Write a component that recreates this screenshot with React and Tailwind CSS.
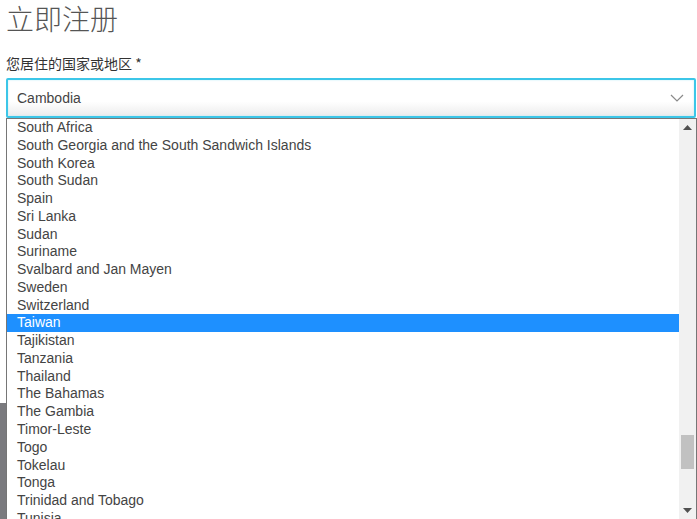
const countries = [
  "South Africa",
  "South Georgia and the South Sandwich Islands",
  "South Korea",
  "South Sudan",
  "Spain",
  "Sri Lanka",
  "Sudan",
  "Suriname",
  "Svalbard and Jan Mayen",
  "Sweden",
  "Switzerland",
  "Taiwan",
  "Tajikistan",
  "Tanzania",
  "Thailand",
  "The Bahamas",
  "The Gambia",
  "Timor-Leste",
  "Togo",
  "Tokelau",
  "Tonga",
  "Trinidad and Tobago",
  "Tunisia",
];

function Scrollbar() {
  return (
    <div className="w-[17px] shrink-0 bg-[#f1f1f1] flex flex-col items-center">
      <div className="h-[17px] w-full flex items-center justify-center">
        <svg width="9" height="5" viewBox="0 0 9 5">
          <path d="M4.5 0L9 5H0z" fill="#505050" />
        </svg>
      </div>
      <div className="flex-1 w-full px-[2px] flex flex-col">
        <div className="h-[299px]" />
        <div className="h-[34px] bg-[#c1c1c1]" />
      </div>
      <div className="h-[17px] w-full flex items-center justify-center">
        <svg width="9" height="5" viewBox="0 0 9 5">
          <path d="M0 0H9L4.5 5z" fill="#505050" />
        </svg>
      </div>
    </div>
  );
}

export default function App() {
  return (
    <div
      className="h-[519px] w-[697px] overflow-hidden bg-white flex flex-col"
      style={{ fontFamily: '"Liberation Sans", Arial, "Noto Sans CJK SC", sans-serif' }}
    >
      <h1
        className="pl-[6px] h-[52px] text-[28px] leading-[36px] font-light text-[#555]"
        style={{ fontFamily: '"Noto Sans CJK SC", sans-serif' }}
      >
        立即注册
      </h1>
      <label
        className="pl-[6px] h-[26px] text-[14px] leading-[22px] text-[#333]"
        style={{ fontFamily: '"Noto Sans CJK SC", sans-serif' }}
      >
        您居住的国家或地区 *
      </label>

      <div className="flex-1 flex min-h-0">
        <div className="w-[6px] shrink-0 flex flex-col">
          <div className="flex-1" />
          <div className="h-[116px] bg-[#7a7a7e]" />
        </div>
        <div className="flex-1 flex flex-col min-w-0">
          <div className="h-[40px] mr-[1px] rounded-[2px] border-2 border-[#3cc6e8] bg-gradient-to-b from-white from-60% to-[#ececec] flex items-center justify-between pl-[9px] pr-[10px] shadow-[inset_0_0_2px_#b8ecf8]">
            <span className="text-[14px] text-[#444]">Cambodia</span>
            <svg width="14" height="8" viewBox="0 0 14 8">
              <path d="M1 1L7 7L13 1" fill="none" stroke="#8a8a8a" strokeWidth="1.2" />
            </svg>
          </div>
          <div className="flex-1 flex border border-[#767676] border-b-0 min-h-0 bg-white">
            <ul className="flex-1 overflow-hidden pt-0">
              {countries.map((c) => (
                <li
                  key={c}
                  className={`h-[17.78px] leading-[17.78px] pl-[10px] text-[14px] whitespace-nowrap ${
                    c === "Taiwan" ? "bg-[#1e90ff] text-white" : "text-[#444]"
                  }`}
                >
                  {c}
                </li>
              ))}
            </ul>
            <Scrollbar />
          </div>
        </div>
      </div>
    </div>
  );
}
